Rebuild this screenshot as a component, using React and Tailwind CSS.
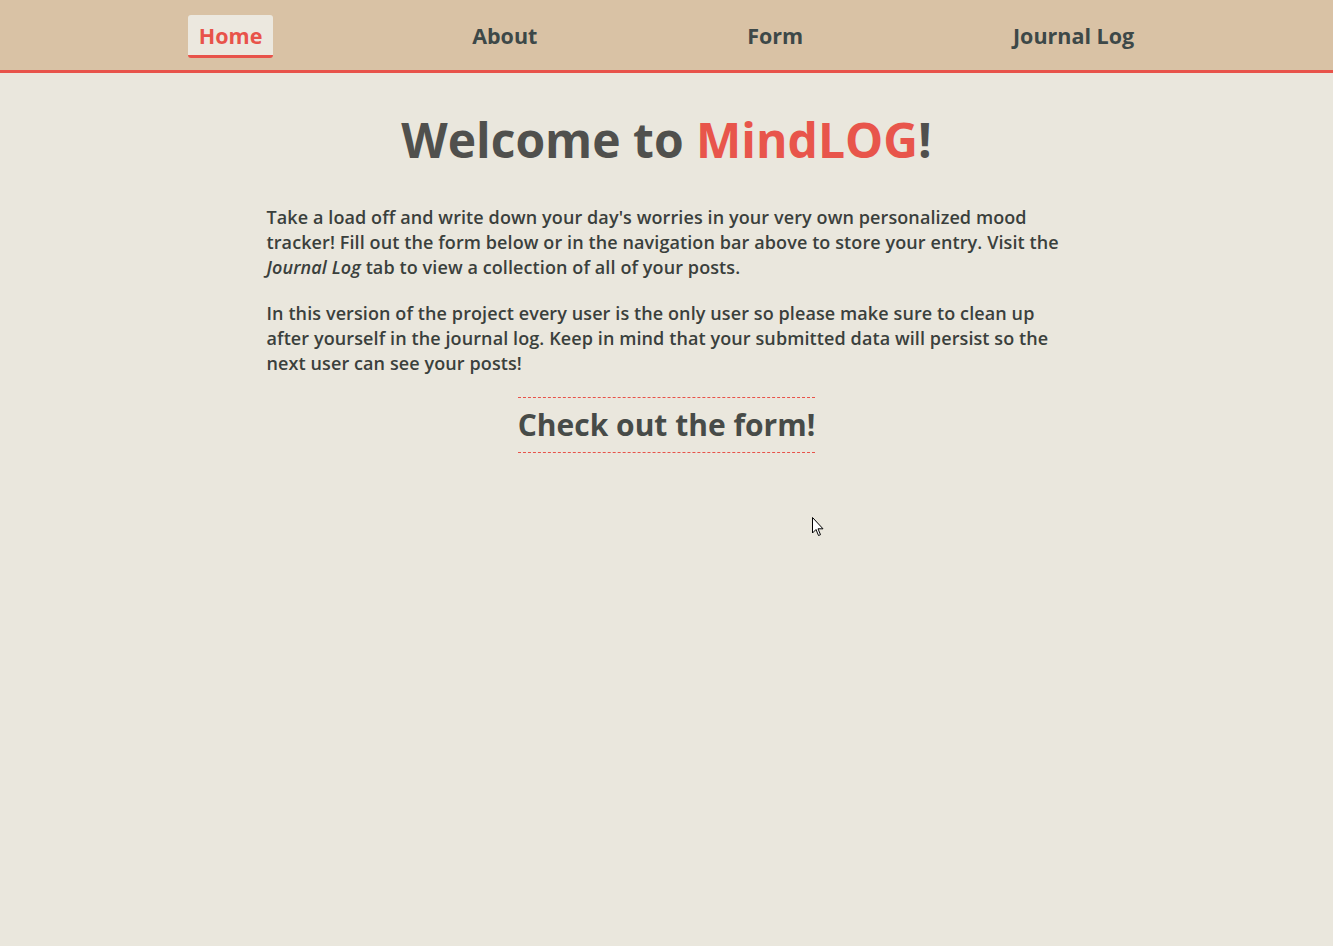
import React from "react";

const links = ["Home", "About", "Form", "Journal Log"];

const Nav = () => {
  return (
    <nav className="flex h-[73px] items-center justify-evenly border-b-[3px] border-[#e8534a] bg-[#d9c2a5] pt-[3px]">
      {links.map((l) => (
        <a
          key={l}
          href="#"
          className={
            l === "Home"
              ? "rounded-[3px] border-b-[3px] border-[#e8534a] bg-[#ece8df] px-[11px] pb-[5px] pt-[6px] text-[21.5px] font-bold leading-[29px] text-[#e8534a]"
              : "border-b-[3px] border-transparent px-[11px] pb-[5px] pt-[6px] text-[21.5px] font-bold leading-[29px] text-[#3d4848]"
          }
        >
          {l}
        </a>
      ))}
    </nav>
  );
};

const App = () => {
  return (
    <div className="relative min-h-[946px] bg-[#eae7dd] font-['Open_Sans',sans-serif]">
      <Nav />
      <main className="flex flex-col items-center">
        <h1 className="mt-[32px] text-[48px] font-bold leading-[70px] text-[#50504d]">
          Welcome to <span className="text-[#e8554b]">MindLOG</span>!
        </h1>
        <div className="mt-[30px] w-[800px] text-[18px] font-semibold leading-[25px] tracking-[0.1px] text-[#3a403c]">
          <p>
            Take a load off and write down your day's worries in your very own
            personalized mood tracker! Fill out the form below or in the
            navigation bar above to store your entry. Visit the{" "}
            <em>Journal Log</em> tab to view a collection of all of your posts.
          </p>
          <p className="mt-[21px]">
            In this version of the project every user is the only user so please
            make sure to clean up after yourself in the journal log. Keep in
            mind that your submitted data will persist so the next user can see
            your posts!
          </p>
        </div>
        <a
          href="#"
          className="mt-[21px] border-y border-dashed border-[#e8534a] py-[8px] text-[30px] font-bold leading-[38px] text-[#474b48]"
        >
          Check out the form!
        </a>
      </main>
      <svg
        className="absolute left-[812px] top-[517px]"
        width="13"
        height="20"
        viewBox="0 0 13 20"
      >
        <path
          d="M0.5 0.5 L0.5 16 L4 12.5 L6.5 18.5 L8.5 17.7 L6 11.8 L11 11.8 Z"
          fill="#fff"
          stroke="#000"
          strokeWidth="1"
          strokeLinejoin="round"
        />
      </svg>
    </div>
  );
};

export default App;
